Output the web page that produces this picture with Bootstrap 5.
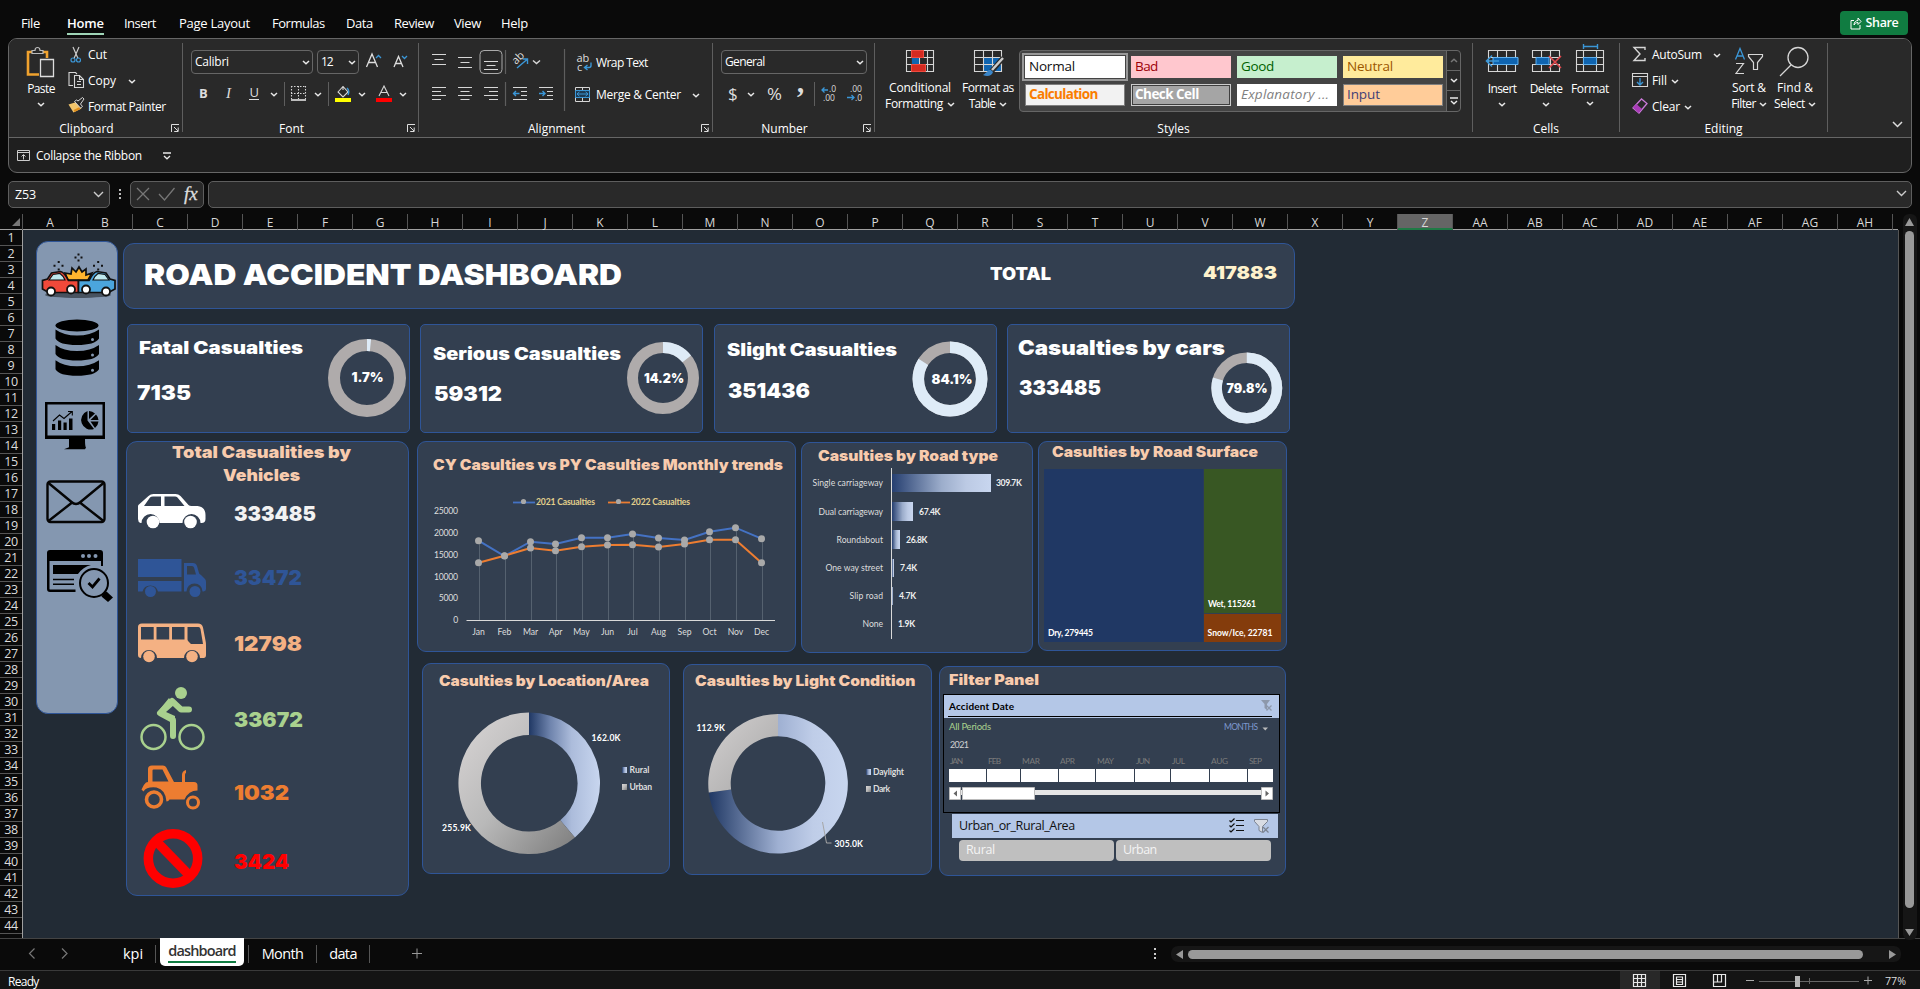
<!DOCTYPE html>
<html lang="en">
<head>
<meta charset="utf-8">
<title>Road Accident Dashboard</title>
<link href="https://cdn.jsdelivr.net/npm/bootstrap@5.3.0/dist/css/bootstrap.min.css" rel="stylesheet">
<style>
:root{--ui:"Open Sans","Noto Sans",sans-serif;--blk:Inter,"Open Sans",sans-serif;--cal:Lato,"Open Sans",sans-serif;--line:#666;--edge:#2f5597;--panel:#333f50}
html,body{height:989px;overflow:hidden}
body{background:#0a0a0a;color:#fff;font:12px/16px var(--ui);width:1920px}
svg{display:block;flex:none;overflow:visible}
span{white-space:nowrap}
.fit{display:inline-block}
.w-i{stroke:#d6d6d6;fill:none;stroke-width:1.1}
.chev{width:8px;height:5px;stroke:#e8e8e8;stroke-width:1.5;fill:none}
/* menu */
.menu{height:38px;display:grid;grid-template-columns:46px 57px 55px 93px 74px 48px 60px 47px 1fr auto;padding:9px 12px 0 21px;align-items:start}
.menu a{color:#fff;text-decoration:none;font-size:13px;line-height:28px;height:26px}
.menu a.active span{font-weight:600;height:26px;border-bottom:2px solid #9fd5b7}
.share{background:#107c41;border:0;border-radius:4px;width:68px;height:24px;margin-top:2px;color:#fff;font-size:12.5px;font-weight:600}
/* ribbon */
.ribbon{margin:0 8px;height:135px;border:1px solid var(--line);border-radius:9px;background:#1f1f1f;overflow:hidden}
.tools{height:99px;background:#292929;border-bottom:1px solid var(--line);display:grid;grid-template-columns:174px 236px 294px 162px 598px 147px 208px 1fr}
.grp{margin-top:4px;height:89px;border-right:1px solid #5e5e5e}
.grp-body{height:78px}
.grp-label{height:14px;line-height:15px;display:flex}
.grp-label span{flex:1;text-align:center}
.grp-label svg{width:8px;height:9px;margin:3px 3px 0 7px}
.tool-row{height:26px;display:flex;align-items:center}
.tall{display:flex;flex-direction:column;align-items:center;text-align:center}
.combo{border:1px solid #666;border-radius:4px;height:24px;display:flex;align-items:center;justify-content:space-between;padding:0 2px 0 3px;background:#292929}
.gallery{width:442px;height:62px;margin-top:7px;border:1px solid #666;border-radius:4px;background:#444;display:grid;grid-template-columns:426px 14px}
.swatches{display:grid;grid-template-columns:repeat(4,100px);gap:6px;grid-auto-rows:22px;padding:5px 0 0 5px}
.swatches div{font-size:13.5px;line-height:20px;padding-left:4px;white-space:nowrap}
.spin{border-left:1px solid #666;background:#292929;border-radius:0 4px 4px 0}
.spin div{height:20px;display:flex;align-items:center;justify-content:center;border-bottom:1px solid #666}
.spin div:last-child{border:0}
/* formula bar */
.fbar{display:grid;grid-template-columns:102px 20px 74px 1fr;margin:8px 8px 0;height:27px}
.fbox{border:1px solid #5e5e5e;border-radius:5px;background:#292929;display:flex;align-items:center}
/* sheet */
.cols{margin-top:6px;display:grid;grid-template-columns:23px repeat(34,55px) 1fr;border-bottom:1px solid #a0a0a0;width:1898px;height:16px}
.cols div{text-align:center;line-height:17px;color:#d8d8d8;border-right:1px solid #555}
.cols .sel{background:#656565;border-bottom:2px solid #1f7a45;height:16px}
.sheet{height:708px;display:grid;grid-template-columns:23px 1876px 21px}
.rows{border-right:1px solid #a0a0a0;overflow:hidden}
.rows div{height:16px;line-height:16px;border-bottom:1px solid #555;text-align:center;color:#ddd;font-size:12.5px;letter-spacing:-.3px}
.canvas{background:#222b35;border-right:1px solid #555;display:flex;align-items:flex-start;overflow:hidden}
.side{width:82px;height:473px;margin:11px 0 0 13px;border:1px solid var(--edge);border-radius:12px;background:#8497b0;flex:none}
.pane{background:var(--panel);border:1px solid var(--edge);border-radius:9px;flex:none}
.blk{font-family:var(--blk);font-weight:900}
.ttl{font-family:var(--blk);font-weight:900;fill:#f8cbad;color:#f8cbad;font-size:14.4px}
.banner{width:1172px;height:66px;margin-top:13px;border-radius:11px;display:flex;align-items:center;line-height:30px}
.kpis{display:flex;gap:10.3px;margin:15px 0 0 4px}
.kpi{width:283px;height:109px;border-radius:5px;display:flex;justify-content:space-between;align-items:flex-start;padding-top:var(--t)}
.kpi .txt{display:flex;flex-direction:column;align-items:flex-start;width:20px}
.veh{width:283px;height:455px;margin:8px 8px 0 3px;border-radius:11px;line-height:23px}
.vrow{display:flex;align-items:center;padding-left:11px;font-size:20.5px;line-height:20px}
.vrow svg{margin-right:28px}
.cal{font-family:var(--cal);font-size:8.6px;fill:#dedede}
.calb{font-family:var(--cal);font-size:8.6px;font-weight:700;fill:#fff}
.timeline{width:337px;height:119px;margin:27px 0 0 3px;border:1px solid #000;font-family:var(--cal)}
.slicer-head{width:326px;height:24px;margin:1px 0 0 12px;background:#b4c7e7;color:#111;display:flex;align-items:center;padding:0 8px 0 7px}
.choices{display:flex;gap:2px;margin:2px 0 0 19px}
.choices div{width:155px;height:21px;background:#bfbfbf;border-radius:4px;color:#f4f4f4;line-height:20px;padding-left:7px;font-size:12.5px}
/* foot */
.tabs{height:32px;border-top:1px solid #444;display:grid;grid-template-columns:110px 46px 93px 68px 53px 1fr 770px;align-items:start;font-size:14.5px}
.stab{height:18px;margin-top:6px;line-height:17px;border-right:1px solid #555;text-align:center}
.stab.on{margin:-1px 4px 0;height:28px;background:#fff;color:#333;border:0;border-radius:0 0 5px 5px;font-weight:600;line-height:25px}
.stab.on span{border-bottom:2px solid #107c41;height:25px}
.status{height:19px;background:#141414;border-top:1px solid #3a3a3a;display:flex;justify-content:space-between}
</style>
</head>
<body>
<svg width="0" height="0" class="position-absolute"><defs>
<symbol id="chev" viewBox="0 0 8 5"><path d="M1 1l3 2.8L7 1"/></symbol>
<symbol id="launch" viewBox="0 0 8 9"><path d="M.5 8V.5H8M3 3l4 4M7.2 3.5v4h-4" stroke="#ddd" fill="none"/></symbol>
<linearGradient id="gBar"><stop offset="0" stop-color="#263f70"/><stop offset=".5" stop-color="#9cadcb"/><stop offset=".75" stop-color="#bccae4"/><stop offset="1" stop-color="#c8d6ef"/></linearGradient>
<linearGradient id="gRur"><stop offset="0" stop-color="#203864"/><stop offset=".3" stop-color="#6f84ad"/><stop offset=".6" stop-color="#acbcdb"/><stop offset="1" stop-color="#c8d6ef"/></linearGradient>
<linearGradient id="gDay"><stop offset="0" stop-color="#203864"/><stop offset=".5" stop-color="#9fb0d2"/><stop offset=".75" stop-color="#bfcde8"/><stop offset="1" stop-color="#c8d6ef"/></linearGradient>
<linearGradient id="gGry" x1="0" y1="0" x2="1" y2="1"><stop offset=".1" stop-color="#d3d0d0"/><stop offset=".5" stop-color="#b9b9b9"/><stop offset="1" stop-color="#7c7c7c"/></linearGradient>
<linearGradient id="gDrk" x1="0" y1="0" x2="1" y2="1"><stop offset="0" stop-color="#d3d0d0"/><stop offset="1" stop-color="#a6a6a6"/></linearGradient>
</defs></svg>

<nav class="menu">
<a href="#"><span class="fit" data-w="19">File</span></a><a href="#" class="active"><span class="fit" data-w="37">Home</span></a><a href="#"><span class="fit" data-w="32">Insert</span></a><a href="#"><span class="fit" data-w="71">Page Layout</span></a><a href="#"><span class="fit" data-w="53">Formulas</span></a><a href="#"><span class="fit" data-w="27">Data</span></a><a href="#"><span class="fit" data-w="40">Review</span></a><a href="#"><span class="fit" data-w="27">View</span></a><a href="#"><span class="fit" data-w="27">Help</span></a>
<button class="share btn p-0 d-flex align-items-center justify-content-center gap-1"><svg width="12" height="13" viewBox="0 0 12 13" fill="none" stroke="#fff"><path d="M4 3.5H1v8.500h9V8M4 8c0-3 2-4.500 4-4.500V1l3 3.500-3 3V5.500C6 5.500 5 6.500 4 8z"/></svg><span class="fit" data-w="33">Share</span></button>
</nav>

<div class="ribbon">
<div class="tools">
 <section class="grp">
  <div class="grp-body d-flex">
   <div class="tall" style="width:64px;margin-right:-5px">
    <svg width="28" height="35" viewBox="30 43 28 35" fill="none"><path d="M42 74.500H31V52h6M45 52h5v6" stroke="#f0a22e" stroke-width="2.600"/><path d="M35 53.500v-3h3c0-4 5-4 5 0h3v3z" stroke="#bbb" stroke-width="1.200" fill="#292929"/><path d="M43.500 59.500h13v17h-13z" stroke="#ddd" stroke-width="1.300" fill="#333"/></svg>
    <span class="fit" data-w="28" style="line-height:22px">Paste</span><svg class="chev" style="margin-top:2px"><use href="#chev"/></svg>
   </div>
   <div style="margin-top:-1px">
    <div class="tool-row"><svg width="20" height="20" viewBox="68 45 20 20" fill="none"><path d="M73 47l5 11.500M79 47l-5 11.500" stroke="#ccc" stroke-width="1.200"/><circle cx="73" cy="60" r="2" stroke="#3b96d6" stroke-width="1.200"/><circle cx="78.500" cy="60" r="2" stroke="#3b96d6" stroke-width="1.200"/></svg><span class="fit" data-w="19">Cut</span></div>
    <div class="tool-row"><svg width="20" height="20" viewBox="68 71 20 20" class="w-i"><path d="M73 85.500h-4V72.500h6.500l1.500 1.500M74.500 75.500h5l4 4v8h-9zM79.500 75.500v4h4M77 81.500h4M77 84.500h4"/></svg><span class="fit me-3" data-w="28">Copy</span><svg class="chev" style="margin-left:-4px"><use href="#chev"/></svg></div>
    <div class="tool-row"><svg width="20" height="20" viewBox="68 97 20 20"><path d="M68.500 104.500l5 8 8-4-5-6.500z" fill="#f3c56b"/><path d="M74 111l6-3" stroke="#e08e1d" stroke-width="2"/><path d="M74.500 101.500l6 6.500 2-1.500-2-2.500 3.500-5-1.500-1.500-4.500 3.500-1.500-1z" fill="#292929" stroke="#d6d6d6"/></svg><span class="fit" data-w="78">Format Painter</span></div>
   </div>
  </div>
  <div class="grp-label"><span>Clipboard</span><svg><use href="#launch"/></svg></div>
 </section>

 <section class="grp">
  <div class="grp-body">
   <div class="d-flex" style="padding:7px 0 0 8px">
    <div class="combo" style="width:122px"><span class="fit" data-w="34">Calibri</span><svg class="chev"><use href="#chev"/></svg></div>
    <div class="combo ms-1" style="width:42px"><span class="fit" data-w="12">12</span><svg class="chev"><use href="#chev"/></svg></div>
    <svg width="50" height="24" viewBox="359 50 50 24"><g fill="none" stroke="#ddd" stroke-width="1.300"><path d="M366.500 67l5.500-13 5.500 13M368.500 62.500h7M394 67l4.500-10.500L403 67M395.500 63.500h6"/><path d="M376 58l2.500-2.500 2.500 2.500M402 56l2.500 2.500 2.500-2.500" stroke="#3b96d6"/></g></svg>
   </div>
   <svg width="220" height="28" viewBox="190 79 220 28" style="margin:5px 0 0 7px">
    <g fill="#ddd" font-size="13" font-family="Open Sans"><text x="199" y="98" font-weight="700">B</text><text x="226" y="98" font-style="italic" font-family="Liberation Serif" font-size="15">I</text><text x="249.500" y="97">U</text></g>
    <path d="M249 99.500h10" stroke="#ddd"/>
    <g class="w-i" stroke-dasharray="1.500 1.500"><path d="M291.500 86v13M298.500 86v13M305.500 86v13M291 86.500h15M291 93.500h15"/></g><path d="M291 100h15" stroke="#eee" stroke-width="1.600"/>
    <path d="M284.500 82v24M328.500 82v24" stroke="#5e5e5e"/>
    <path d="M338 92l5-5.500 5 5.500-5 5zM343 90v-4" class="w-i"/><path d="M347 88c2 2 2 5 1 7" stroke="#3b96d6" stroke-width="1.500" fill="none"/><path d="M335 98h16v4h-16z" fill="#ff0"/>
    <path d="M379 96l5-10 5 10M381 92.500h6" class="w-i"/><path d="M376 98h16v4h-16z" fill="red"/>
    <g fill="none" stroke="#e8e8e8" stroke-width="1.400"><path d="M271 93l3 2.800 3-2.800M315 93l3 2.800 3-2.800M359 93l3 2.800 3-2.800M400 93l3 2.800 3-2.800"/></g>
   </svg>
  </div>
  <div class="grp-label"><span>Font</span><svg><use href="#launch"/></svg></div>
 </section>

 <section class="grp">
  <div class="grp-body d-flex">
   <svg width="153" height="72" viewBox="419 43 153 72">
    <g stroke="#d6d6d6" stroke-width="1.200" fill="none">
     <path d="M432 54.500h14M434.500 59.500h9M432 64.500h14M458 57.500h14M460.500 62.500h9M458 67.500h14M484 61.500h14M486.500 65.500h9M484 69.500h14"/>
     <path d="M432 87.500h14M432 91.500h9M432 95.500h14M432 99.500h9M458 87.500h14M460.500 91.500h9M458 95.500h14M460.500 99.500h9M484 87.500h14M489 91.500h9M484 95.500h14M489 99.500h9"/>
     <path d="M513 87.500h14M521 91.500h6M521 95.500h6M513 99.500h14M539 87.500h14M547 91.500h6M547 95.500h6M539 99.500h14"/>
     <rect x="480" y="50.500" width="22" height="23" rx="4" stroke="#aaa" stroke-width="1"/>
     <path d="M505.500 50v24M505.500 82v24M564.500 49v62" stroke="#5e5e5e"/>
     <path d="M533 60.500l3.500 3 3.500-3" stroke-width="1.500"/>
    </g>
    <g stroke="#3b96d6" stroke-width="1.400" fill="none"><path d="M517 68l10-8.500M527.500 64v-5h-5M519.500 93.500h-6M516 91l-2.500 2.500 2.500 2.500M539 93.500h6M542.500 91l2.500 2.500-2.500 2.500"/></g>
    <text transform="translate(516 65) rotate(-45)" font-size="11" fill="#ddd" font-family="Open Sans">ab</text>
   </svg>
   <div style="margin-top:4px">
    <div class="d-flex align-items-center" style="height:32px"><svg width="24" height="20" viewBox="572 53 24 20"><text font-size="11" fill="#ddd" font-family="Open Sans"><tspan x="576.500" y="62">ab</tspan><tspan x="577" y="71">c</tspan></text><path d="M591 62.500v3q0 2-2 2h-4M587.500 65l-3 2.500 3 2.500" stroke="#3b96d6" stroke-width="1.400" fill="none"/></svg><span class="fit" data-w="52">Wrap Text</span></div>
    <div class="d-flex align-items-center" style="height:32px"><svg width="24" height="20" viewBox="572 85 24 20" fill="none"><path d="M575.500 87.500h14v14h-14zM582.500 87v3M582.500 98v4" stroke="#d6d6d6"/><path d="M575.500 90.500h14v7h-14z" stroke="#3b96d6" fill="#1d3a52"/><path d="M577 94h11M579.500 91.800L577 94l2.500 2.200M585.500 91.800L588 94l-2.500 2.200" stroke="#3b96d6"/></svg><span class="fit" data-w="85" style="margin-right:11px">Merge &amp; Center</span><svg class="chev"><use href="#chev"/></svg></div>
   </div>
  </div>
  <div class="grp-label"><span>Alignment</span><svg><use href="#launch"/></svg></div>
 </section>

 <section class="grp">
  <div class="grp-body">
   <div style="padding:7px 0 0 8px"><div class="combo" style="width:146px"><span class="fit" data-w="40">General</span><svg class="chev"><use href="#chev"/></svg></div></div>
   <svg width="146" height="28" viewBox="721 79 146 28" style="margin:5px 0 0 8px"><g fill="#ddd" font-family="Open Sans"><text x="728" y="100" font-size="17">$</text><text x="767" y="100" font-size="17" textLength="15" lengthAdjust="spacingAndGlyphs">%</text><text x="795.500" y="107" font-size="29" font-weight="700" font-family="Liberation Serif">’</text>
   <g font-size="8.500"><text x="829" y="92">.0</text><text x="823" y="101">.00</text><text x="850" y="92">.00</text><text x="855" y="101">.0</text></g></g><path d="M814.500 82v24" stroke="#5e5e5e"/><path d="M748 93l3 2.800 3-2.800" stroke="#e8e8e8" stroke-width="1.400" fill="none"/><path d="M828 90h-6M824.500 87.500L822 90l2.500 2.500M847 97.500h7M851.500 95l2.500 2.500-2.500 2.500" stroke="#3b96d6" stroke-width="1.300" fill="none"/></svg>
  </div>
  <div class="grp-label"><span>Number</span><svg><use href="#launch"/></svg></div>
 </section>

 <section class="grp">
  <div class="grp-body d-flex">
   <div class="tall" style="width:74px;margin-left:8px"><svg width="28" height="37" viewBox="906 43 28 37"><path d="M906.500 50.500h27v21h-27zM906 57.500h28M906 64.500h28M912.500 50v22M919.500 50v22M927.500 50v22" class="w-i"/><path d="M911.500 50.500h12v7h-12zM911.500 64.500h14v7h-14z" fill="#d42a20" stroke="#f04a3e"/><path d="M912 58h7v6h-7z" fill="#0f64b0"/></svg><span class="fit" data-w="62">Conditional</span><div class="d-flex align-items-center gap-1"><span class="fit" data-w="58">Formatting</span><svg class="chev"><use href="#chev"/></svg></div></div>
   <div class="tall" style="width:62px"><svg width="32" height="37" viewBox="972 43 32 37"><path d="M983 57h18v15h-18z" fill="#0f64b0"/><path d="M974.500 50.500h27v21h-27zM974 57.500h28M974 64.500h28M983.500 50v22M992.500 50v22" class="w-i"/><path d="M1003 58l-12 14" stroke="#292929" stroke-width="5"/><path d="M1003 58l-11 12" stroke="#ccc" stroke-width="2.500"/><path d="M991 70c-3-1-4 3-8 5 4 2 9 1 10-3z" fill="#3b86c8"/></svg><span class="fit" data-w="52">Format as</span><div class="d-flex align-items-center gap-1"><span class="fit" data-w="27">Table</span><svg class="chev"><use href="#chev"/></svg></div></div>
   <div class="gallery"><div class="swatches">
    <div style="background:#fff;color:#111;outline:2px solid #999;outline-offset:1px"><span class="fit" data-w="46">Normal</span></div><div style="background:#ffc7ce;color:#9c0006"><span class="fit" data-w="23">Bad</span></div><div style="background:#c6efce;color:#006100"><span class="fit" data-w="33">Good</span></div><div style="background:#ffeb9c;color:#9c5700"><span class="fit" data-w="46">Neutral</span></div>
    <div style="background:#f2f2f2;color:#fa7d00;box-shadow:inset 0 0 0 1px #7f7f7f;font-weight:700"><span class="fit" data-w="69">Calculation</span></div><div style="background:#a5a5a5;color:#fff;font-weight:700;box-shadow:inset 0 0 0 1px #ccc,inset 0 0 0 2px #3f3f3f"><span class="fit" data-w="64">Check Cell</span></div><div style="background:#fff;color:#7f7f7f;font-style:italic"><span class="fit" data-w="88">Explanatory ...</span></div><div style="background:#ffcc99;color:#3f3f76;box-shadow:inset 0 0 0 1px #7f7f7f"><span class="fit" data-w="33">Input</span></div>
   </div><div class="spin"><div><svg class="chev" style="transform:scaleY(-1);stroke:#777"><use href="#chev"/></svg></div><div><svg class="chev"><use href="#chev"/></svg></div><div><svg width="8" height="8" viewBox="0 0 8 8" fill="none" stroke="#e8e8e8" stroke-width="1.400"><path d="M0 1h8M1 4l3 2.800L7 4"/></svg></div></div></div>
  </div>
  <div class="grp-label"><span>Styles</span></div>
 </section>

 <section class="grp">
  <div class="grp-body d-flex" style="padding-left:7px">
   <div class="tall" style="width:44px"><svg width="32" height="35" viewBox="1486 43 32 35"><path d="M1488.500 50.500h27v21h-27zM1488 57.500h28M1488 64.500h28M1497.500 50v22M1506.500 50v22" class="w-i"/><path d="M1493 57.500h25v7h-25z" fill="#0f64b0" stroke="#5fb0ee"/><path d="M1487 61h12M1492 55.500l-5.500 5.500 5.500 5.500" stroke="#3b96d6" stroke-width="1.600" fill="none"/></svg><span class="fit" data-w="29" style="line-height:22px">Insert</span><svg class="chev" style="margin-top:2px"><use href="#chev"/></svg></div>
   <div class="tall" style="width:44px"><svg width="30" height="35" viewBox="1531 43 30 35"><path d="M1532.500 57V50.500h27V57M1532.500 65v6.500h27V65M1541.500 50v22M1550.500 50v22M1532 57.500h28M1532 64.500h28" class="w-i"/><path d="M1536 57.500h13v7h-13z" fill="#0f64b0" stroke="#5fb0ee"/><path d="M1549 56l12 12M1561 56l-12 12" stroke="#e0474c" stroke-width="1.600"/></svg><span class="fit" data-w="33" style="line-height:22px">Delete</span><svg class="chev" style="margin-top:2px"><use href="#chev"/></svg></div>
   <div class="tall" style="width:44px"><svg width="30" height="35" viewBox="1575 43 30 35"><path d="M1576.500 50.500h27v21h-27zM1576 57.500h28M1576 64.500h28M1583.500 50v22M1596.500 50v22" class="w-i"/><path d="M1583.500 57.500h13v7h-13z" fill="#0f64b0" stroke="#5fb0ee"/><path d="M1583 46.500h15M1583.500 44v5M1597.500 44v5" stroke="#3b96d6" stroke-width="1.400"/></svg><span class="fit" data-w="38" style="line-height:21px">Format</span><svg class="chev" style="margin-top:2px"><use href="#chev"/></svg></div>
  </div>
  <div class="grp-label"><span>Cells</span></div>
 </section>

 <section class="grp">
  <div class="grp-body d-flex">
   <div style="width:106px;margin-top:-1px;padding-left:10px">
    <div class="tool-row"><svg width="22" height="20" viewBox="1630 45 22 20" class="w-i"><path d="M1645 50v-2.500h-11l6 6.500-6 6.500h11V58" stroke-width="1.400"/></svg><span class="fit" data-w="50" style="margin-right:11px">AutoSum</span><svg class="chev"><use href="#chev"/></svg></div>
    <div class="tool-row"><svg width="22" height="20" viewBox="1630 71 22 20" class="w-i"><path d="M1632.500 73.500h15v13h-15zM1632.500 76.500h15"/><path d="M1640 78v7M1637 82l3 3 3-3" stroke="#3b96d6" stroke-width="1.400"/></svg><span class="fit me-1" data-w="15">Fill</span><svg class="chev"><use href="#chev"/></svg></div>
    <div class="tool-row"><svg width="22" height="20" viewBox="1630 97 22 20"><path d="M1633 108l8.500-9 5.500 4.500-8 9.500z" fill="#292929" stroke="#c979d6" stroke-width="1.300"/><path d="M1633 107.500l3.500-3.500 5.500 5-3.500 4z" fill="#a93bb8"/></svg><span class="fit me-1" data-w="28">Clear</span><svg class="chev"><use href="#chev"/></svg></div>
   </div>
   <div class="tall" style="width:46px"><svg width="30" height="37" viewBox="1735 43 30 37" fill="none"><path d="M1736.500 59.500l4.500-11 4.500 11M1738 56h6" stroke="#3b96d6" stroke-width="1.300"/><path d="M1737 63.500h7.500l-7.500 10h8" stroke="#d6d6d6" stroke-width="1.200"/><path d="M1749.500 54.500h14v2l-5 6v7h-4v-7l-5-6z" stroke="#d6d6d6" stroke-width="1.200"/></svg><span class="fit" data-w="34">Sort &amp;</span><div class="d-flex align-items-center" style="gap:3px"><span class="fit" data-w="25">Filter</span><svg class="chev"><use href="#chev"/></svg></div></div>
   <div class="tall" style="width:46px"><svg width="30" height="37" viewBox="1782 43 30 37" class="w-i"><circle cx="1800" cy="57.500" r="10" stroke-width="1.300"/><path d="M1793 65l-11 11" stroke-width="1.300"/></svg><span class="fit" data-w="36">Find &amp;</span><div class="d-flex align-items-center" style="gap:3px"><span class="fit" data-w="31">Select</span><svg class="chev"><use href="#chev"/></svg></div></div>
  </div>
  <div class="grp-label"><span>Editing</span></div>
 </section>
 <div class="d-flex justify-content-end align-items-end"><svg width="11" height="7" viewBox="0 0 11 7" fill="none" stroke="#ddd" stroke-width="1.500" style="margin:0 8px 9px 0"><path d="M1 1l4.500 4.500L10 1"/></svg></div>
</div>
<div class="d-flex align-items-center" style="height:35px;padding-left:8px"><svg width="13" height="11" viewBox="0 0 13 11" fill="none" stroke="#ccc" style="margin-right:6px"><path d="M.5.500h12v10H.5zM.5 2.500h12M6.500 9.500V5M4.500 6.500l2-2 2 2"/></svg><span class="fit" data-w="106">Collapse the Ribbon</span><svg width="8" height="8" viewBox="0 0 8 8" fill="none" stroke="#e8e8e8" stroke-width="1.300" style="margin-left:21px"><path d="M0 1h8M1 4l3 2.800L7 4"/></svg></div>
</div>

<div class="fbar">
 <div class="fbox justify-content-between" style="padding:0 5px 0 6px"><span class="fit" data-w="21" style="font-size:12.500px">Z53</span><svg width="11" height="7" viewBox="0 0 11 7" fill="none" stroke="#ccc" stroke-width="1.400"><path d="M1 1l4.500 4.500L10 1"/></svg></div>
 <svg width="20" height="27" viewBox="0 0 20 27" fill="#bbb"><path d="M9 8h2v2H9zM9 12h2v2H9zM9 16h2v2H9z"/></svg>
 <div class="fbox"><svg width="72" height="25" viewBox="131 182 72 25" fill="none"><path d="M137 188l12 12M149 188l-12 12M159 194l5.500 6 10-12" stroke="#777" stroke-width="1.300"/><text x="184" y="200" font-family="Liberation Serif" font-style="italic" font-size="19" fill="#ddd" stroke="#ddd" stroke-width=".3">fx</text></svg></div>
 <div class="fbox justify-content-end" style="margin-left:4px;padding-right:4px"><svg width="11" height="7" viewBox="0 0 11 7" fill="none" stroke="#ccc" stroke-width="1.400" style="margin-top:-3px"><path d="M1 1l4.500 4.500L10 1"/></svg></div>
</div>

<div class="cols" id="cols"><div><svg width="8" height="8" viewBox="0 0 8 8" style="margin:4px 0 0 12px"><path d="M8 0v8H0z" fill="#777"/></svg></div></div>

<div class="sheet">
 <div class="rows" id="rows"></div>
 <main class="canvas">
  <aside class="side">
   <svg width="80" height="471" viewBox="37 242 80 471">
    <g fill="#111"><path id="spark" d="M77.500 253.500h2v2h-2zM77.500 259.500h2v2h-2zM74.500 256.500h2v2h-2zM80.500 256.500h2v2h-2z"/><path d="M57.700 261h2v2h-2zM57.700 268.500h2v2h-2zM53.500 264.700h2v2h-2zM61.500 264.700h2v2h-2zM97.200 261h2v2h-2zM97.200 268.500h2v2h-2zM93 264.700h2v2h-2zM101 264.700h2v2h-2z"/></g>
    <ellipse cx="78" cy="295" rx="33" ry="3" fill="#000" opacity=".45"/>
    <path d="M68 280l-3-7 6 1 1-6 4 4 3-5 3 5 4-3 0 6 6-2-4 7z" fill="#ffb42e" stroke="#111" stroke-width="1.700"/>
    <path d="M42.500 289v-8.500l5-1.500 4-6 9-1.500q4 1 8 9h10v12h-30z" fill="#f0493a" stroke="#111" stroke-width="1.700"/><path d="M49 280l4-5.500 7-1q3 2 5 6.500z" fill="#bfe9ee" stroke="#111" stroke-width="1.200"/>
    <path d="M115 289v-8.500l-5-1.500-4-6-9-1.500q-4 1-8 9H78.500v12h30z" fill="#4ba5dd" stroke="#111" stroke-width="1.700"/><path d="M109 280l-4-5.500-7-1q-3 2-5 6.500z" fill="#bfe9ee" stroke="#111" stroke-width="1.200"/>
    <g fill="#fff" stroke="#111" stroke-width="1.800"><circle cx="51" cy="291.500" r="4"/><circle cx="71" cy="289.500" r="4"/><circle cx="86" cy="289.500" r="4"/><circle cx="106" cy="291.500" r="4"/></g>
    <ellipse cx="77" cy="325.500" rx="21.500" ry="6"/>
    <g id="disk"><path d="M55.500 329.500q8 6 21.500 6t22-6v9q-4 6.500-22 6.500t-21.500-6.500z"/><circle cx="92.500" cy="339.500" r="1.500" fill="#8497b0"/></g><use href="#disk" y="15.500"/><use href="#disk" y="30.700"/>
    <path d="M45 402h60v37H45zM47.500 404.500v31h55v-31z" fill-rule="evenodd"/><path d="M69 439h16q0 8 1 8.500l-1 1.700H64l5-2z"/>
    <path d="M52 424h3.200v6H52zM58 420.500h3.200v9.500H58zM63.500 422.500h3.200v7.500h-3.200zM69 418.500h3.500V430H69z"/><path d="M53 421l6.500-6 4.500 3.500 8-7M68 411.500h4.300v4" fill="none" stroke="#000" stroke-width="1.100"/>
    <path d="M87.500 411v9.500l6.500 8.500a9.500 9.500 0 1 1-6.500-18zM89 411a9.500 9.500 0 0 1 6 2.500l-6 5.500zM96 414.500a9.500 9.500 0 0 1 2.500 5.500H90.500zM98.500 421.500a9.500 9.500 0 0 1-3.500 6.500l-4.500-6.500z"/>
    <g fill="none" stroke="#050505" stroke-width="2.400"><rect x="47.500" y="481.500" width="57" height="40.500" rx="3"/><path d="M48.500 483l23 19q4.500 4 9 0l23-19M48.500 521l23-18M103.500 521l-23-18"/></g>
    <g><path d="M47 553q0-3 3-3h50q3 0 3 3v8H49.500v28q0 .500 1 .500h25v2.500H50q-3 0-3-3z"/><path d="M101 561h2v5h-2zM53 565h38q-8 2-13 9H53z"/><path d="M53 579.500h21M53 584.300h21" stroke="#000" stroke-width="1.500"/><g fill="#8497b0"><circle cx="83" cy="556" r="2"/><circle cx="89" cy="556" r="2"/><circle cx="95.500" cy="556" r="2"/></g><circle cx="94" cy="583" r="14" fill="#8497b0" stroke="#000" stroke-width="2"/><path d="M88.500 583l4 4 7-8.500" fill="none" stroke="#000" stroke-width="2.800"/><path d="M103.500 593l3-1.500 6.500 6-5 4.500-6.500-5.500z"/></g>
   </svg>
  </aside>

  <div style="margin-left:5px">
   <header class="pane banner">
    <span class="blk fit" data-w="478" style="font-size:29px;margin:-2px 368px 0 20px">ROAD ACCIDENT DASHBOARD</span>
    <span class="blk fit" data-w="61" style="font-size:17px;margin:-4px 152px 0 0">TOTAL</span>
    <span class="blk fit" data-w="74" style="font-size:18px;margin-top:-6px;color:#fff2cc">417883</span>
   </header>

   <div class="kpis">
    <div class="pane kpi" style="--t:13px"><div class="txt ps-2"><span class="blk fit" data-w="164" style="font-size:17px;line-height:20px;margin-left:3px">Fatal Casualties</span><span class="blk fit" data-w="54" style="font-size:20.500px;line-height:24px;margin:23px 0 0 1px">7135</span></div>
     <svg width="80" height="80" viewBox="326.500 338 80 80" style="margin-right:2px" fill="none" stroke-width="12"><circle cx="366.500" cy="378" r="33" stroke="#afabab"/><circle cx="366.500" cy="378" r="33" stroke="#deebf7" pathLength="100" stroke-dasharray="1.700 98.300" transform="rotate(-90 366.500 378)"/><text x="351" y="381.500" class="blk" font-size="12.500" fill="#fff" textLength="32" lengthAdjust="spacingAndGlyphs">1.7%</text></svg></div>
    <div class="pane kpi" style="--t:19px"><div class="txt ps-2"><span class="blk fit" data-w="188" style="font-size:17px;line-height:20px;margin-left:4px">Serious Casualties</span><span class="blk fit" data-w="68" style="font-size:20.500px;line-height:24px;margin:18px 0 0 5px">59312</span></div>
     <svg width="74" height="74" viewBox="627 340 74 74" style="margin:-3px 2px 0 0" fill="none" stroke-width="11"><circle cx="664" cy="377" r="30.500" stroke="#afabab"/><circle cx="664" cy="377" r="30.500" stroke="#deebf7" pathLength="100" stroke-dasharray="14.200 85.800" transform="rotate(-90 664 377)"/><text x="645" y="382" class="blk" font-size="12.500" fill="#fff" textLength="40" lengthAdjust="spacingAndGlyphs">14.2%</text></svg></div>
    <div class="pane kpi" style="--t:15px"><div class="txt ps-2"><span class="blk fit" data-w="170" style="font-size:17px;line-height:20px;margin-left:4px">Slight Casualties</span><span class="blk fit" data-w="82" style="font-size:20.500px;line-height:24px;margin:19px 0 0 5px">351436</span></div>
     <svg width="76" height="76" viewBox="912 340.500 76 76" style="margin:1px 8px 0 0" fill="none" stroke-width="11.500"><circle cx="950" cy="378.500" r="31.700" stroke="#afabab"/><circle cx="950" cy="378.500" r="31.700" stroke="#deebf7" pathLength="100" stroke-dasharray="84.100 15.900" transform="rotate(-90 950 378.500)"/><text x="931.500" y="383" class="blk" font-size="12.500" fill="#fff" textLength="41" lengthAdjust="spacingAndGlyphs">84.1%</text></svg></div>
    <div class="pane kpi" style="--t:12px"><div class="txt ps-2"><span class="blk fit" data-w="207" style="font-size:20px;line-height:22px;margin-left:2px">Casualties by cars</span><span class="blk fit" data-w="82" style="font-size:20.500px;line-height:24px;margin:17px 0 0 3px">333485</span></div>
     <svg width="72" height="72" viewBox="1211.500 351.500 72 72" style="margin:15px 6px 0 0" fill="none" stroke-width="10.500"><circle cx="1247.300" cy="387.500" r="30.200" stroke="#afabab"/><circle cx="1247.300" cy="387.500" r="30.200" stroke="#deebf7" pathLength="100" stroke-dasharray="79.800 20.200" transform="rotate(-90 1247.300 387.500)"/><text x="1227" y="392" class="blk" font-size="12.500" fill="#fff" textLength="41" lengthAdjust="spacingAndGlyphs">79.8%</text></svg></div>
   </div>

   <div class="d-flex align-items-start">
    <section class="pane veh">
     <div class="ttl text-center" style="font-size:16.500px;height:52px;padding-right:13px;margin-top:-1px"><span class="fit" data-w="179">Total Casualities by</span><br><span class="fit" data-w="77">Vehicles</span></div>
     <div class="vrow" style="height:34px;color:#fff;margin-top:1px"><svg width="68" height="34" viewBox="138 494 68 34"><path fill="currentColor" fill-rule="evenodd" d="M138 506q0-1 1.500-2l9-8q2-2 5-2h22q3 0 5 2l8 9q1 1 3 1h6q8 1 8 9v4q0 4-4 4h-1a9 9 0 0 0-18 0h-23a9 9 0 0 0-18 0h-1q-2.500-1-2.500-4zM144 506h17v-9.500h-8q-2 0-3 1zM164.500 506h20l-7-8.500q-1-1-2.500-1h-10.500z"/><circle cx="153" cy="522" r="6.300" fill="currentColor"/><circle cx="190.500" cy="522" r="6.300" fill="currentColor"/></svg><span class="blk fit" data-w="82" style="padding-top:5px;color:#f2f2f2">333485</span></div>
     <div class="vrow" style="height:38px;color:#2f5597;margin-top:31px"><svg width="68" height="38" viewBox="138 559 68 38" fill="currentColor"><path d="M138 559h43.500v18H138zM138 581h43.500v10.500H158a8 8 0 0 0-15.500 0H138z"/><path fill-rule="evenodd" d="M184 591.500V563h9q3 0 4 3l2 7q0 1 2 2l4 4q1 1 1 3v7q0 2-2.500 2.500h-1a8 8 0 0 0-16 0zM187 574.500h9l-2-7q-.500-1.500-2-1.500h-5z"/><circle cx="150.500" cy="591.500" r="5.500"/><circle cx="195" cy="591.500" r="5.500"/></svg><span class="blk fit" data-w="68">33472</span></div>
     <div class="vrow" style="height:39px;color:#f4b183;margin-top:26px"><svg width="68" height="39" viewBox="138 623 68 39" fill="currentColor"><path fill-rule="evenodd" d="M142 623.500h56q4 0 5 4l2.500 13q.500 2 .500 5V655q0 3-2.500 3H200a8 8 0 0 0-16 0h-27a8 8 0 0 0-16 0q-3 0-3-3v-28q0-3.500 4-3.500zM141 627v12.500h12.700V627zM156.500 627v12.500h12.700V627zM172 627v12.500h12.500V627zM187.500 627v12.500q0 1 1 2l2.500 2.500h12l-2.500-15q-.500-2-2-2z"/><circle cx="149" cy="656.500" r="5.800"/><circle cx="192" cy="656.500" r="5.800"/></svg><span class="blk fit" data-w="68" style="padding-top:2px">12798</span></div>
     <div class="vrow" style="height:63px;color:#a9d18e;margin-top:25px"><svg width="68" height="63" viewBox="138 687 68 63" fill="currentColor"><circle cx="181" cy="693" r="6"/><path d="M189 709.500h-8l-9-8.500-12 12 13 7v16" fill="none" stroke="currentColor" stroke-width="6" stroke-linecap="round" stroke-linejoin="round"/><path d="M160 709l9-11 5 7-8 7 9 4v5l-18-7z"/><g fill="none" stroke="currentColor" stroke-width="2.500"><circle cx="153.500" cy="737" r="12"/><circle cx="191.500" cy="737" r="12"/></g></svg><span class="blk fit" data-w="69" style="padding-top:2px">33672</span></div>
     <div class="vrow" style="height:44px;color:#ed7d31;margin-top:15px"><svg width="68" height="44" viewBox="138 765 68 44" fill="currentColor"><path fill-rule="evenodd" d="M148 782v-13q0-3.500 4-3.500h11q2 0 3 1.500l8 15h8v-7q0-4 4-5v3q-1 0-1 2v7h9q3.500 0 3.500 3.500v5q-9 0-13 9h-15q-1 2-3 2-1-12-10-14-10-1-13 4l-2-2q2-5 4.500-7zM152.500 781.500h16l-6-12h-9q-1 0-1 1z"/><g fill="none" stroke="currentColor"><circle cx="154" cy="799.500" r="7.500" stroke-width="3.600"/><circle cx="193" cy="802.500" r="5.500" stroke-width="3"/></g></svg><span class="blk fit" data-w="55" style="padding-top:11px">1032</span></div>
     <div class="vrow" style="height:59px;color:red;margin-top:20px"><svg width="68" height="59" viewBox="138 829 68 59" fill="none" stroke="currentColor" stroke-width="9.500"><circle cx="173" cy="858.500" r="24.700"/><path d="M156 841l34 35"/></svg><span class="blk fit" data-w="55" style="padding-top:6px">3424</span></div>
    </section>

    <div>
     <div class="d-flex align-items-start" style="margin-top:8px">
      <section class="pane" style="width:379px;height:211px"><svg id="trend" width="377" height="209" viewBox="418 442 377 209">
       <text class="ttl" x="433" y="470" textLength="350" lengthAdjust="spacingAndGlyphs">CY Casulties vs PY Casulties Monthly trends</text></svg></section>
      <section class="pane" style="width:232px;height:211px;margin:1px 0 0 5px"><svg id="roads" width="230" height="209" viewBox="802 443 230 209">
       <text class="ttl" x="818" y="461" textLength="180" lengthAdjust="spacingAndGlyphs">Casulties by Road type</text></svg></section>
      <section class="pane" style="width:249px;height:210px;margin-left:5px"><svg width="247" height="208" viewBox="1039 442 247 208">
       <text class="ttl" x="1052" y="457" textLength="206" lengthAdjust="spacingAndGlyphs">Casulties by Road Surface</text>
       <path d="M1044 469h159.500v173H1044z" fill="#203864"/><path d="M1204 469h78v144h-78z" fill="#385723"/><path d="M1204 614h77v28h-77z" fill="#843c0c"/>
       <g class="calb"><text x="1048" y="636" textLength="45">Dry, 279445</text><text x="1208" y="607" textLength="48">Wet, 115261</text><text x="1207.500" y="636" textLength="65">Snow/Ice, 22781</text></g></svg></section>
     </div>
     <div class="d-flex align-items-start" style="margin:10px 0 0 5px">
      <section class="pane" style="width:248px;height:211px"><svg width="246" height="209" viewBox="423 664 246 209">
       <text class="ttl" x="439" y="686" textLength="210" lengthAdjust="spacingAndGlyphs">Casulties by Location/Area</text>
       <path fill="url(#gRur)" d="M529 712.500A70.800 70.800 0 0 1 574.900 837.400L560.300 820.300A48.300 48.300 0 0 0 529 735z"/>
       <path fill="url(#gGry)" d="M574.900 837.400A70.800 70.800 0 1 1 529 712.500V735A48.300 48.300 0 1 0 560.300 820.300z"/>
       <g class="calb"><text x="591.500" y="741" textLength="29">162.0K</text><text x="442" y="831" textLength="29">255.9K</text></g>
       <path d="M622 767h5v6h-5z" fill="url(#gRur)"/><path d="M622 784h5v6h-5z" fill="url(#gGry)"/><g class="cal" font-weight="700"><text x="629.500" y="773" textLength="20">Rural</text><text x="629.500" y="790" textLength="22.500">Urban</text></g></svg></section>
      <section class="pane" style="width:249px;height:211px;margin:1px 0 0 13px"><svg width="247" height="209" viewBox="684 665 247 209">
       <text class="ttl" x="695" y="685.500" textLength="220.500" lengthAdjust="spacingAndGlyphs">Casulties by Light Condition</text>
       <path fill="url(#gDay)" d="M778 713.900A69.800 69.800 0 1 1 708.800 792.400L731.100 789.500A47.300 47.300 0 1 0 778 736.200z"/>
       <path fill="url(#gDrk)" d="M708.800 792.400A69.800 69.800 0 0 1 778 713.900V736.200A47.300 47.300 0 0 0 731.100 789.500z"/>
       <path d="M822.500 822l4 21h5" fill="none" stroke="#a6a6a6"/>
       <g class="calb"><text x="696.500" y="731" textLength="28.500">112.9K</text><text x="834.500" y="847" textLength="28.500">305.0K</text></g>
       <path d="M866 769h5v6h-5z" fill="url(#gRur)"/><path d="M866 786h5v6h-5z" fill="url(#gGry)"/><g class="cal" font-weight="700"><text x="873" y="775" textLength="31">Daylight</text><text x="873" y="792" textLength="17">Dark</text></g></svg></section>
      <section class="pane" style="width:347px;height:210px;margin:3px 0 0 7px">
       <div style="height:0"><span class="ttl fit" data-w="90" style="margin-left:9px;line-height:26px">Filter Panel</span></div>
       <div class="timeline"><svg id="months" width="335" height="117" viewBox="944 695 335 117">
        <path d="M944 695h335v23H944z" fill="#b4c7e7"/><path d="M948 716.500h324" stroke="#000"/>
        <text x="949" y="709.500" font-size="10" font-weight="700" fill="#000" textLength="65">Accident Date</text>
        <path d="M1261 700h9l-3 4v6l-2.500-2v-4z" fill="#8d98ab"/><path d="M1266.500 705.500l5 5M1271.500 705.500l-5 5" stroke="#8d98ab" stroke-width="1.300"/>
        <text x="949" y="730" font-size="9.500" fill="#a9d18e" textLength="42">All Periods</text><text x="1224" y="730" font-size="8.500" fill="#7d98cf" textLength="34">MONTHS</text><path d="M1262.500 727.500h5.500l-2.700 3z" fill="#bbb"/>
        <text x="950" y="748" font-size="9" fill="#d0d0d0" textLength="19">2021</text>
        <path d="M961 790h300v5h-300z" fill="#e6e6e6"/><g fill="#fff" stroke="#bbb"><path d="M949.500 787.500h11v12h-11zM962.500 787.500h72v12h-72zM1261.500 787.500h11v12h-11z"/></g><path d="M957 790.500v6l-3.500-3zM1265.500 790.500v6l3.500-3z" fill="#666"/></svg></div>
       <div class="slicer-head"><span class="fit me-auto" data-w="116" style="font-size:12.500px">Urban_or_Rural_Area</span>
        <svg width="42" height="18" viewBox="1229 817 42 18" fill="none"><path d="M1237 820.500h8M1237 825.500h8M1237 830.500h8M1230.500 820.500l1.500 1.500 3.500-3.500M1230.500 825.500l1.500 1.500 3.500-3.500M1230.500 830.500l1.500 1.500 3.500-3.500" stroke="#111" stroke-width="1.200"/><path d="M1255.500 819.500h13v2l-5 5v6l-3.500-2v-4l-4.500-5z" stroke="#7a8290" fill="#d8dce4"/><path d="M1264 827l5.500 5.500M1269.500 827l-5.500 5.500" stroke="#7a8290" stroke-width="1.200"/></svg></div>
       <div class="choices"><div><span class="fit" data-w="29">Rural</span></div><div><span class="fit" data-w="34">Urban</span></div></div>
      </section>
     </div>
    </div>
   </div>
  </div>
 </main>
 <svg width="21" height="723" viewBox="1899 215 21 723" style="margin-top:-15px"><rect x="1903" y="214" width="14" height="726" rx="6" fill="#161616"/><path d="M1905 226l4.500-8 4.500 8zM1905 929h9l-4.500 7z" fill="#999"/><rect x="1905" y="231" width="9" height="677" rx="4.500" fill="#999"/></svg>
</div>

<footer class="tabs">
 <svg width="110" height="31" viewBox="0 939 110 31" fill="none" stroke="#777" stroke-width="1.200"><path d="M34.500 948.500l-5 5 5 5M62 948.500l5 5-5 5"/></svg>
 <div class="stab" style="padding-left:1px"><span class="fit" data-w="20">kpi</span></div>
 <div><div class="stab on" style="margin-right:5px"><span class="fit" data-w="68">dashboard</span></div></div>
 <div class="stab" style="border-left:1px solid #555;margin-left:-1px"><span class="fit" data-w="42">Month</span></div>
 <div class="stab"><span class="fit" data-w="28">data</span></div>
 <svg width="100" height="31" viewBox="370 939 100 31"><path d="M412 953.500h10M417 948.500v10" stroke="#999"/></svg>
 <svg width="770" height="31" viewBox="1150 939 770 31"><path d="M1154 948h2v2h-2zM1154 953h2v2h-2zM1154 957h2v2h-2z" fill="#ccc"/><rect x="1171" y="946" width="730" height="16" rx="7" fill="#161616"/><path d="M1183 950v9l-7-4.500zM1889 950v9l7-4.500z" fill="#999"/><rect x="1188" y="950" width="675" height="9" rx="4.500" fill="#999"/></svg>
</footer>
<div class="status"><span class="fit" data-w="31" style="margin:3px 0 0 8px">Ready</span>
 <svg width="300" height="18" viewBox="1620 971 300 18" fill="none"><path d="M1620 971h40v18h-40z" fill="#282828"/><g stroke="#e8e8e8" stroke-width="1.200"><path d="M1633.500 974.500h12v12h-12zM1637.500 974v13M1641.500 974v13M1633 978.500h13M1633 982.500h13M1673.500 974.500h12v12h-12zM1676.500 977h6v7.500h-6zM1677 979.500h5M1677 982h5M1713.500 974.500h12v12h-12zM1717.500 974v8M1721.500 974v8h-8"/></g><path d="M1746 980.500h8M1864 980.500h8M1868 976.500v8" stroke="#aaa"/><path d="M1759 981.500h100M1809.500 978v6" stroke="#666"/><path d="M1795 976h5v11h-5z" fill="#b5b5b5"/><text x="1885" y="985" font-size="11.500" fill="#ddd" font-family="Open Sans" textLength="21" lengthAdjust="spacingAndGlyphs">77%</text></svg>
</div>

<script src="https://cdn.jsdelivr.net/npm/bootstrap@5.3.0/dist/js/bootstrap.bundle.min.js"></script>
<script>
// sheet headings
const cols = document.getElementById('cols');
for (let i = 0; i < 34; i++) {
  const d = document.createElement('div');
  d.textContent = i < 26 ? String.fromCharCode(65 + i) : 'A' + String.fromCharCode(39 + i);
  if (i === 25) d.className = 'sel';
  cols.append(d);
}
const rows = document.getElementById('rows');
for (let i = 1; i < 46; i++) { const d = document.createElement('div'); d.textContent = i < 45 ? i : ''; rows.append(d); }

// labels keep the widths given in data-w: headings stretch, interface text is tracked
document.querySelectorAll('.fit[data-w]').forEach(e => {
  const w = e.getBoundingClientRect().width, t = +e.dataset.w;
  if (e.matches('.blk, .ttl, .ttl *')) {
    e.style.width = t + 'px';
    e.style.textAlign = 'left';
    e.style.transformOrigin = '0 50%';
    e.style.transform = `scaleX(${(t / w).toFixed(4)})`;
  } else e.style.letterSpacing = ((t - w) / (e.textContent.length - .5)).toFixed(3) + 'px';
});

// monthly trend
const X = [478.5,504.5,530.5,555.5,581.5,607.5,632.5,658.5,684.5,709.5,735.5,761.5];
const A = [540.7,556,541.7,544,537.7,537.7,534,538,540,531.7,527.7,538.7];
const B = [562.7,555.7,548,550.7,546.7,545,544.7,547,544,539.7,539.7,562.7];
const M = ['Jan','Feb','Mar','Apr','May','Jun','Jul','Aug','Sep','Oct','Nov','Dec'];
const line = (Y, c) => `<polyline points="${X.map((x, i) => x + ',' + Y[i])}" fill="none" stroke="${c}" stroke-width="2"/>`;
const dots = Y => X.map((x, i) => `<circle cx="${x}" cy="${Y[i]}" r="3.5" fill="#a9a9a9"/>`).join('');
let s = X.map((x, i) => `<path d="M${Math.round(x) + .5} ${A[i]}V620" stroke="#55616f"/>`).join('');
s += '<path d="M466.500 620.500H775" stroke="#d9d9d9"/>' + line(A, '#4472c4') + dots(A) + line(B, '#ed7d31') + dots(B);
s += X.map((x, i) => `<text class="cal" text-anchor="middle" x="${x}" y="635">${M[i]}</text>`).join('');
[[25000,514.3],[20000,536],[15000,558],[10000,580],[5000,601],[0,623]].forEach(([v, y]) => {
  const w = String(v).length * 4.8; s += `<text class="cal" x="${458 - w}" y="${y}" textLength="${w}">${v}</text>`; });
[[513,'#4472c4',2021],[608,'#ed7d31',2022]].forEach(([x, c, y]) => {
  s += `<path d="M${x} 502.500h22" stroke="${c}" stroke-width="1.800"/><circle cx="${x + 10.5}" cy="501.500" r="2.600" fill="#a9a9a9"/><text class="calb" style="fill:#e3d08c" x="${x + 23}" y="505.300" textLength="59">${y} Casualties</text>`; });
document.getElementById('trend').insertAdjacentHTML('beforeend', s);

// road type bars
s = '';
[['Single carriageway',812.5,483,99,18,'309.7K',996],['Dual carriageway',818.5,511.5,21,19,'67.4K',919],['Roundabout',836.5,539.5,8,19,'26.8K',906],['One way street',825.5,568,2,18,'7.4K',900],['Slip road',849.5,596,1,18,'4.7K',899],['None',862.5,624,0,18,'1.9K',898]].forEach(([n, x, y, w, h, v, vx]) => {
  s += `<rect x="892" y="${y - h / 2}" width="${w}" height="${h}" fill="url(#gBar)"/><text class="cal" x="${x}" y="${y + 3}" textLength="${883 - x}">${n}</text><text class="calb" style="fill:#eee" x="${vx}" y="${y + 3.3}" textLength="${v.length * 4.3}">${v}</text>`; });
s += '<path d="M891.500 468v171" stroke="#d9d9d9"/>';
document.getElementById('roads').insertAdjacentHTML('beforeend', s);

// timeline months
const P = [949,987,1021,1059,1096,1135,1171,1210,1248,1274];
const W = [13,13,18,15,17,14,13,17,13];
document.getElementById('months').insertAdjacentHTML('beforeend', W.map((w, i) =>
  `<path d="M${P[i]} 769H${P[i + 1] - 1}V782H${P[i]}z" fill="#fff"/><text x="${P[i] + 1}" y="764" font-size="8.300" fill="#7b7b7b" textLength="${w}">${M[i].toUpperCase()}</text>`).join(''));
</script>
</body>
</html>
